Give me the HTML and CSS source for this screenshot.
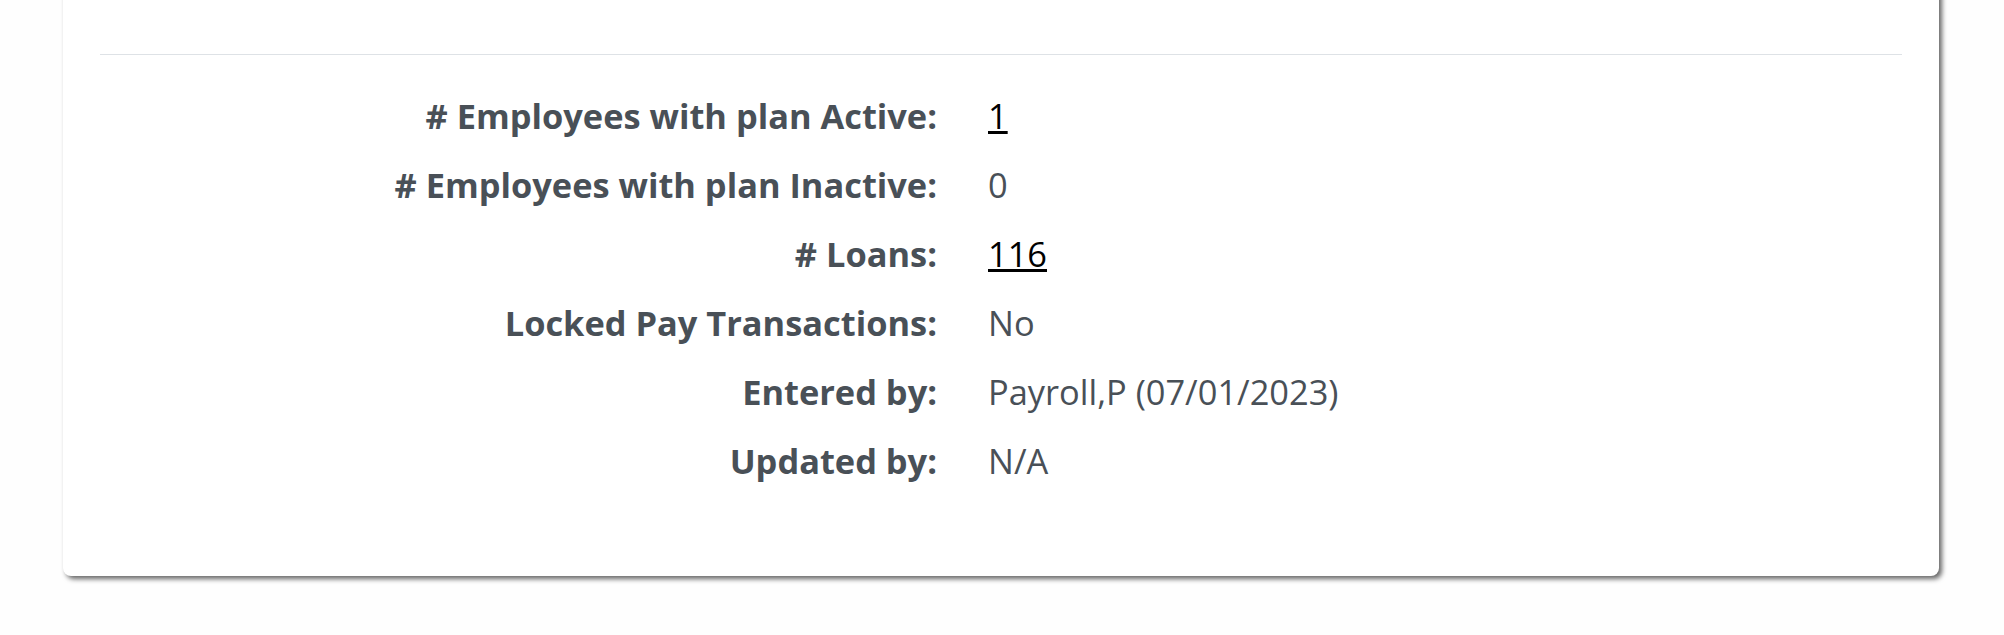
FILE: index.html
```html
<!DOCTYPE html>
<html>
<head>
<meta charset="utf-8" />
<title>Plan Details</title>
<link rel="stylesheet" href="styles.css">
</head>

<body>
<div class="page">
  <div class="card">
    <hr class="divider" />
    <div class="details">
      <div class="label"># Employees with plan Active:</div>
      <div class="value"><a href="#">1</a></div>

      <div class="label"># Employees with plan Inactive:</div>
      <div class="value">0</div>

      <div class="label"># Loans:</div>
      <div class="value"><a href="#">116</a></div>

      <div class="label">Locked Pay Transactions:</div>
      <div class="value">No</div>

      <div class="label">Entered by:</div>
      <div class="value">Payroll,P (07/01/2023)</div>

      <div class="label">Updated by:</div>
      <div class="value">N/A</div>
    </div>
  </div>
</div>
</body>
</html>
```

FILE: styles.css
```css
html, body {
  background: #fefefe;
}

body {
  margin: 0;
  font-family: "Open Sans", "Noto Sans", sans-serif;
  color: #495057;
}

.page {
  padding: 0 65px 60px 63px;
}

.card {
  margin-top: -30px;
  background: #fff;
  border-radius: 8px;
  box-shadow: 3px 3px 5px rgba(0, 0, 0, 0.6);
  padding: 84px 37px 81px 37px;
}

.divider {
  margin: 0;
  border: 0;
  border-top: 1px solid #dee2e6;
}

.details {
  display: grid;
  grid-template-columns: 837px 1fr;
  column-gap: 51px;
  margin-top: 26px;
  font-size: 34.4px;
  line-height: 69px;
}

.label {
  text-align: right;
  font-weight: 700;
}

.value a {
  color: #000;
  text-decoration: underline;
}
```
